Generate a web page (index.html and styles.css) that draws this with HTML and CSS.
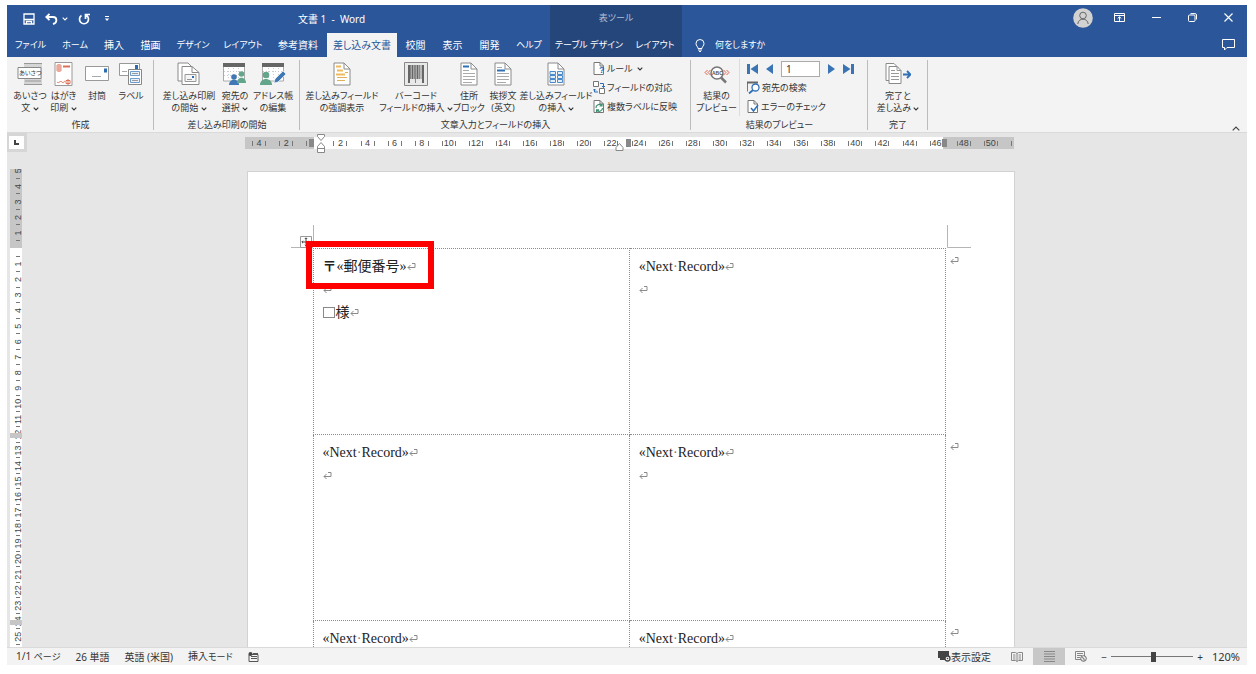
FILE: index.html
```html
<!DOCTYPE html>
<html lang="ja">
<head>
<meta charset="utf-8">
<title>文書 1 - Word</title>
<link rel="stylesheet" href="styles.css">
</head>
<body>
<svg class="defs" aria-hidden="true">
  <symbol id="chev" viewBox="0 0 6 4"><path d="M.7.7 3 3 5.300.7" fill="none" stroke="currentColor" stroke-width="1.1"/></symbol>
  <symbol id="ret" viewBox="0 0 9 8"><path d="M8 .5V4.500H1M5 .5H8M3.500 2 1 4.500 3.500 7" fill="none" stroke="#8a8a8a" stroke-width="1"/></symbol>
  <symbol id="sheet" viewBox="0 0 18 24"><path d="M1 1h10l6 6v16H1z" fill="#fff" stroke="#8a8a8a"/><path d="M11 1v6h6" fill="none" stroke="#8a8a8a"/></symbol>
  <symbol id="minisheet" viewBox="0 0 12 13"><path d="M1 .5h6l3.500 3.500v8.500H1z" fill="#fff" stroke="#777"/><path d="M7 .5V4h3.500" fill="none" stroke="#777"/></symbol>
</svg>
<div class="app">
  <header class="titlebar">
    <div class="quick">
      <button class="tool" aria-label="上書き保存"><svg width="12" height="12" viewBox="0 0 12 12"><path d="M1 1h10v10H1z" fill="none" stroke="#fff" stroke-width="1.300"/><path d="M1 6.500h10M3.500 11V8.500h5V11" fill="none" stroke="#fff" stroke-width="1.300"/></svg></button>
      <button class="tool undo" aria-label="元に戻す"><svg width="13" height="12" viewBox="0 0 13 12"><path d="M4.500.8 1.300 4l3.200 3.200M1.500 4h6.500c4.500 0 4.500 6 0 7" fill="none" stroke="#fff" stroke-width="1.800"/></svg><svg class="chev" width="6" height="4"><use href="#chev"/></svg></button>
      <button class="tool" aria-label="やり直し"><svg width="12" height="12" viewBox="0 0 12 12"><path d="M3.500 2.500A4.500 4.500 0 1 0 8.500 2.500M7.500 6V1.500H12" fill="none" stroke="#fff" stroke-width="1.700"/></svg></button>
      <button class="tool" aria-label="クイック アクセスのカスタマイズ"><svg width="6" height="6" viewBox="0 0 6 6"><path d="M1 .5h4" stroke="#fff"/><path d="M.8 2.500h4.400L3 5z" fill="#fff"/></svg></button>
    </div>
    <h1 class="doc-title">文書 1 &nbsp;- &nbsp;Word</h1>
    <div class="context-title kana">表ツール</div>
    <div class="window-tools">
      <button class="tool" aria-label="アカウント"><svg width="20" height="20" viewBox="0 0 20 20"><circle cx="10" cy="10" r="9.800" fill="#d2d2d2"/><circle cx="10" cy="7.500" r="3.300" fill="none" stroke="#666"/><path d="M4.800 16c.5-6.500 9.900-6.500 10.400 0" fill="none" stroke="#666"/></svg></button>
      <button class="tool" aria-label="リボンの表示オプション"><svg width="11" height="9" viewBox="0 0 11 9"><path d="M.5.5h10v8H.5zM.5 2.500h10" fill="none" stroke="#fff"/><path d="M5.500 8V4M3.700 5.500 5.500 3.800l1.800 1.700" fill="none" stroke="#fff"/></svg></button>
      <button class="tool" aria-label="最小化"><svg width="9" height="9" viewBox="0 0 9 9"><path d="M0 4.500h9" stroke="#fff"/></svg></button>
      <button class="tool" aria-label="元のサイズに戻す"><svg width="9" height="9" viewBox="0 0 9 9"><rect x=".5" y="2" width="6.500" height="6.500" rx="1" fill="none" stroke="#fff"/><path d="M2.500.6H7A1.500 1.500 0 0 1 8.500 2v4.500" fill="none" stroke="#fff"/></svg></button>
      <button class="tool" aria-label="閉じる"><svg width="9" height="9" viewBox="0 0 9 9"><path d="m.5.5 8 8M8.500.5l-8 8" stroke="#fff" stroke-width="1.100"/></svg></button>
    </div>
  </header>
  <nav class="tabs" aria-label="リボン タブ">
    <button class="kana">ファイル</button><button class="kana">ホーム</button><button>挿入</button><button>描画</button><button class="kana">デザイン</button><button class="kana">レイアウト</button><button>参考資料</button><button class="active">差し込み文書</button><button>校閲</button><button>表示</button><button>開発</button><button class="kana">ヘルプ</button><button class="context kana">テーブル デザイン</button><button class="context kana">レイアウト</button>
    <button class="tell kana"><svg width="10" height="13" viewBox="0 0 10 13"><path d="M3 9.500C3 7.500 1 7 1 4.500a4 4 0 0 1 8 0C9 7 7 7.500 7 9.500zM3 11h4M4 12.500h2" fill="none" stroke="#fff"/></svg>何をしますか</button>
    <button class="comment" aria-label="コメント"><svg width="13" height="12" viewBox="0 0 13 12"><path d="M.5.5h12v8H5L2.500 11V8.500h-2z" fill="none" stroke="#fff"/></svg></button>
  </nav>

  <section class="ribbon kana" aria-label="差し込み文書">
    <div class="group">
      <div class="items create">
        <button class="big"><svg width="26" height="24" viewBox="0 0 26 24"><path d="M7 1h18v22H7z" fill="#d5d5d5"/><path d="M7 1.500h18M7 22.500h18M8 19h16" stroke="#999"/><path d="M1 5.500h23v11H1z" fill="#fff" stroke="#888"/><text x="2" y="13" class="icon-ja">あいさつ</text></svg><span>あいさつ<br>文 <svg class="chev" width="6" height="4"><use href="#chev"/></svg></span></button>
        <button class="big"><svg width="19" height="24" viewBox="0 0 19 24"><path d="M1 .5h17v23H1z" fill="#fff" stroke="#999"/><path d="M3 3h4v6H3zM3 5h4M3 7h4M5 2v8" fill="none" stroke="#e58b78"/><path d="M9 4.500h7" stroke="#d9705a" stroke-width="2"/><path d="M3 20c2 2 3-2 5 0s2-1 3-1M12 18.500h4v3h-4zM14 17v6" fill="none" stroke="#e07058"/></svg><span>はがき<br>印刷 <svg class="chev" width="6" height="4"><use href="#chev"/></svg></span></button>
        <button class="big"><svg width="24" height="24" viewBox="0 0 24 24"><path d="M.5 4.500h23v14H.5z" fill="#fff" stroke="#999"/><path d="M19 6.500h3v4h-3z" fill="#2b6cb3"/><path d="M7 14.500h9" stroke="#aaa"/></svg><span>封筒</span></button>
        <button class="big"><svg width="24" height="24" viewBox="0 0 24 24"><path d="M.5 1.500h20v12H.5z" fill="#fff" stroke="#999"/><path d="M16 3h3v4h-3z" fill="#2b6cb3"/><path d="M3 9.500h5" stroke="#aaa"/><path d="M9.500 7.500h13v15h-13z" fill="#fff" stroke="#888"/><path d="M11.500 9.500h9v4h-9zM11.500 16.500h9v4h-9z" fill="#e9f1fa" stroke="#6f9ccb"/><path d="M13 11.500h6M13 18.500h6" stroke="#999"/></svg><span>ラベル</span></button>
      </div>
      <h2>作成</h2>
    </div>
    <div class="group">
      <div class="items start">
        <button class="big"><svg width="24" height="24" viewBox="0 0 24 24"><path d="M1 1h10l5 5v13H1z" fill="#fff" stroke="#8a8a8a"/><path d="M5 4.500h10l7 6v12H5z" fill="#fff" stroke="#8a8a8a"/><path d="M15 4.500v6h7" fill="none" stroke="#8a8a8a"/><path d="M8 12.500h11v7H8z" fill="#f6f6f6" stroke="#999"/><path d="M15 14h2v2h-2z" fill="#2b6cb3"/><path d="M10 17.500h5" stroke="#999"/></svg><span>差し込み印刷<br>の開始 <svg class="chev" width="6" height="4"><use href="#chev"/></svg></span></button>
        <button class="big"><svg width="24" height="24" viewBox="0 0 24 24"><path d="M.5 2h21v17H.5z" fill="#fff" stroke="#aaa"/><path d="M0 1h22v4H0z" fill="#666"/><path d="M1 9.500h20M1 13.500h20M5.500 6v12M10.500 6v12M15.500 6v12" stroke="#ccc" stroke-dasharray="1 2"/><circle cx="11" cy="15" r="2.800" fill="#3f78b5"/><path d="M6 23c0-7 10-7 10 0z" fill="#3f78b5"/><circle cx="18.500" cy="12" r="2.800" fill="#65a58c"/><path d="M14 21c0-7 9-7 9 0z" fill="#65a58c"/></svg><span>宛先の<br>選択 <svg class="chev" width="6" height="4"><use href="#chev"/></svg></span></button>
        <button class="big"><svg width="26" height="24" viewBox="0 0 26 24"><path d="M2.500 2h21v17h-21z" fill="#fff" stroke="#aaa"/><path d="M2 1h22v4H2z" fill="#666"/><path d="M3 9.500h20M8.500 6v12M13.500 6v12M18.500 6v12" stroke="#ccc" stroke-dasharray="1 2"/><circle cx="6" cy="13" r="3.300" fill="#65a58c"/><path d="M0 23c0-8 12-8 12 0z" fill="#65a58c"/><path d="m14 21 1-4 8-8 3 3-8 8z" fill="#3f78b5" stroke="#fff" stroke-width=".6"/></svg><span>アドレス帳<br>の編集</span></button>
      </div>
      <h2>差し込み印刷の開始</h2>
    </div>
    <div class="group">
      <div class="items fields">
        <button class="big"><svg width="18" height="24"><use href="#sheet"/><path d="M3 4.500h5M4 8.500h6M3 12.500h9" stroke="#f0b95c" stroke-width="2"/><path d="M12 10.500h3M4 15.500h10M4 18.500h8" stroke="#e3b05a"/></svg><span>差し込みフィールド<br>の強調表示</span></button>
        <button class="big"><svg width="24" height="24" viewBox="0 0 24 24"><path d="M.5.5h23v23H.5z" fill="#e9e9e9" stroke="#888"/><path d="M5 3v18M8.500 3v14M13.500 3v14M19 3v18" stroke="#666" stroke-width="2"/><path d="M6.500 3v14M10.500 3v14M11.500 3v18M15.500 3v14M17 3v14" stroke="#888"/></svg><span>バーコード<br>フィールドの挿入 <svg class="chev" width="6" height="4"><use href="#chev"/></svg></span></button>
        <button class="big"><svg width="18" height="24"><use href="#sheet"/><path d="M3 4.500h6" stroke="#2f6fb6" stroke-width="2"/><path d="M3 8.500h6M3 11.500h12M3 14.500h12M3 17.500h12M3 20.500h9" stroke="#aaa"/></svg><span>住所<br>ブロック</span></button>
        <button class="big"><svg width="18" height="24"><use href="#sheet"/><path d="M3 8.500h8" stroke="#2f6fb6" stroke-width="2"/><path d="M3 5.500h5M3 11.500h12M3 14.500h12M3 17.500h12M3 20.500h9" stroke="#aaa"/></svg><span>挨拶文<br>(英文)</span></button>
        <button class="big"><svg width="18" height="24"><use href="#sheet"/><path d="M3 9.500h5.500v3H3zM10.500 9.500h5v3h-5zM3 13.500h5.500v3H3zM10.500 13.500h5v3h-5zM3 17.500h5.500v3H3zM10.500 17.500h5v3h-5z" fill="#e3eef9" stroke="#4b8ac6"/></svg><span>差し込みフィールド<br>の挿入 <svg class="chev" width="6" height="4"><use href="#chev"/></svg></span></button>
        <div class="stack">
          <button class="small"><svg width="12" height="13"><use href="#minisheet"/><text x="6" y="11" class="icon-q">?</text></svg>ルール <svg class="chev" width="6" height="4"><use href="#chev"/></svg></button>
          <button class="small"><svg width="12" height="13" viewBox="0 0 12 13"><path d="M.5.5h5v5h-5zM6.500 7.500h5v5h-5z" fill="#fff" stroke="#777"/><path d="M7 2.500h3.500v4M9 5l1.500 1.500L12 5M5 11H1.500V8M0 9.500 1.500 8 3 9.500" fill="none" stroke="#2b6cb3"/></svg>フィールドの対応</button>
          <button class="small"><svg width="12" height="13"><use href="#minisheet"/><path d="M3 8a3.200 3.200 0 0 1 5.500-2.500M9.500 8A3.200 3.200 0 0 1 4 10.300M9 3.500v2.500H6.500M3.500 12V9.800H6" fill="none" stroke="#3f9270" stroke-width="1.200"/></svg>複数ラベルに反映</button>
        </div>
      </div>
      <h2>文章入力とフィールドの挿入</h2>
    </div>
    <div class="group">
      <div class="items preview">
        <button class="big"><svg width="26" height="24" viewBox="0 0 26 24"><path d="M3.500 8 1 10.500 3.500 13M6.500 8 4 10.500 6.500 13M19.500 8l2.500 2.500-2.500 2.500M22.500 8l2.500 2.500-2.500 2.500" fill="none" stroke="#e0604a"/><circle cx="13" cy="11" r="6" fill="#fff" stroke="#777" stroke-width="1.500"/><path d="m17 15.500 5 5" stroke="#777" stroke-width="2.500"/><text x="8" y="13" class="icon-abc">ABC</text></svg><span>結果の<br>プレビュー</span></button>
        <div class="stack ruled">
          <div class="records">
            <button aria-label="先頭のレコード"><svg width="11" height="10" viewBox="0 0 11 10"><path d="M0 0h3v10H0zM11 0v10L3.500 5z" fill="#3a74b4"/></svg></button>
            <button aria-label="前のレコード"><svg width="7" height="10" viewBox="0 0 7 10"><path d="M7 0v10L0 5z" fill="#3a74b4"/></svg></button>
            <input type="text" value="1" aria-label="レコード">
            <button aria-label="次のレコード"><svg width="7" height="10" viewBox="0 0 7 10"><path d="M0 0v10l7-5z" fill="#3a74b4"/></svg></button>
            <button aria-label="最後のレコード"><svg width="11" height="10" viewBox="0 0 11 10"><path d="M8 0h3v10H8zM0 0v10l7.500-5z" fill="#3a74b4"/></svg></button>
          </div>
          <button class="small"><svg width="13" height="13" viewBox="0 0 13 13"><path d="M.5 10.500V1.500h10" fill="none" stroke="#777"/><path d="M0 .5h11v2H0z" fill="#666"/><circle cx="8.500" cy="6.500" r="3.500" fill="#fff" stroke="#2f6fb6" stroke-width="1.300"/><path d="m6 9-4 3.500" stroke="#2f6fb6" stroke-width="1.800"/></svg>宛先の検索</button>
          <button class="small"><svg width="12" height="13"><use href="#minisheet"/><path d="m4 8 2.500 3L11 5" fill="none" stroke="#2f6fb6" stroke-width="1.500"/></svg>エラーのチェック</button>
        </div>
      </div>
      <h2>結果のプレビュー</h2>
    </div>
    <div class="group">
      <div class="items finish">
        <button class="big"><svg width="26" height="24" viewBox="0 0 26 24"><path d="M1 1.500h8l4 4v13H1z" fill="#fff" stroke="#8a8a8a"/><path d="M4 4.500h8l4 4v13H4z" fill="#fff" stroke="#8a8a8a"/><path d="M12 4.500v4h4M6 8.500h4M6 11.500h8M6 14.500h8M6 17.500h8" fill="none" stroke="#999"/><path d="M18 12.500h7M22 9l3.500 3.500L22 16" fill="none" stroke="#2f6fb6" stroke-width="1.800"/></svg><span>完了と<br>差し込み <svg class="chev" width="6" height="4"><use href="#chev"/></svg></span></button>
      </div>
      <h2>完了</h2>
    </div>
    <button class="collapse" aria-label="リボンを折りたたむ"><svg width="8" height="5" viewBox="0 0 8 5"><path d="M.7 4.300 4 1l3.300 3.300" fill="none" stroke="#444" stroke-width="1.200"/></svg></button>
  </section>

  <main class="workspace">
    <button class="tab-stop" aria-label="タブの種類"><svg width="5" height="5" viewBox="0 0 5 5"><path d="M1 0v4h4" fill="none" stroke="#444" stroke-width="2"/></svg></button>
    <div class="h-ruler"><svg id="hruler" width="767" height="20"></svg></div>
    <div class="v-ruler"><svg id="vruler" width="12" height="478"></svg></div>
    <div class="canvas">
      <article class="page">
        <svg class="crop" width="680" height="24" viewBox="0 0 680 24"><path d="M22.500 0v22M0 22.500h22M656.500 0v22.500H680" fill="none" stroke="#b5b5b5"/></svg>
        <svg class="handle" width="12" height="12" viewBox="0 0 12 12"><path d="M.5.5h11v11H.5z" fill="#fff" stroke="#999"/><path d="M6 2v8M2 6h8M4.800 3 6 1.800 7.200 3M4.800 9 6 10.200 7.200 9M3 4.800 1.800 6 3 7.200M9 4.800 10.200 6 9 7.200" fill="none" stroke="#444"/></svg>
        <table class="labels">
          <tr>
            <td><p><strong>〒</strong>«郵便番号»<svg class="ret"><use href="#ret"/></svg></p><p><svg class="ret"><use href="#ret"/></svg></p><p><i class="space"></i>様<svg class="ret"><use href="#ret"/></svg></p></td>
            <td><p>«Next<b>·</b>Record»<svg class="ret"><use href="#ret"/></svg></p><p><svg class="ret"><use href="#ret"/></svg></p></td>
            <td class="end"><svg class="ret"><use href="#ret"/></svg></td>
          </tr>
          <tr>
            <td><p>«Next<b>·</b>Record»<svg class="ret"><use href="#ret"/></svg></p><p><svg class="ret"><use href="#ret"/></svg></p></td>
            <td><p>«Next<b>·</b>Record»<svg class="ret"><use href="#ret"/></svg></p><p><svg class="ret"><use href="#ret"/></svg></p></td>
            <td class="end"><svg class="ret"><use href="#ret"/></svg></td>
          </tr>
          <tr>
            <td><p>«Next<b>·</b>Record»<svg class="ret"><use href="#ret"/></svg></p></td>
            <td><p>«Next<b>·</b>Record»<svg class="ret"><use href="#ret"/></svg></p></td>
            <td class="end"><svg class="ret"><use href="#ret"/></svg></td>
          </tr>
        </table>
        <div class="highlight"></div>
      </article>
    </div>
  </main>

  <footer class="status">
    <div class="info"><span>1/1 <span class="kana">ページ</span></span><span>26 単語</span><span>英語 (米国)</span><span>挿入<span class="kana">モード</span></span>
      <svg width="11" height="10" viewBox="0 0 11 10"><path d="M1 2.500h9v7H1z" fill="none" stroke="#555"/><path d="M5 1.500h5M3 4.500h6M3 6.500h6" stroke="#555"/><circle cx="2.500" cy="2" r="2" fill="#444"/></svg></div>
    <div class="views">
      <button class="display"><svg width="13" height="11" viewBox="0 0 13 11"><path d="M0 0h11v6H7v3H2V7H0z" fill="#444"/><circle cx="9.500" cy="7.500" r="2.500" fill="#f3f3f3" stroke="#444" stroke-width="1.300"/><circle cx="9.500" cy="7.500" r=".8" fill="#444"/></svg>表示設定</button>
      <button class="view" aria-label="閲覧モード"><svg width="12" height="10" viewBox="0 0 12 10"><path d="M.5.5h4l1.500 1 1.500-1h4v8h-4L6 9.500l-1.500-1h-4zM6 1.500v8M2 3h2.500M2 5h2.500M2 7h2.500M7.500 3H10M7.500 5H10M7.500 7H10" fill="none" stroke="#888"/></svg></button>
      <button class="view active" aria-label="印刷レイアウト"><svg width="11" height="11" viewBox="0 0 11 11"><path d="M0 .5h11M0 3h11M0 5.500h11M0 8h11M0 10.500h11" stroke="#888"/></svg></button>
      <button class="view" aria-label="Web レイアウト"><svg width="12" height="11" viewBox="0 0 12 11"><path d="M.5.5h9v8h-9zM2 2.500h6M2 4.500h5M2 6.500h3" fill="none" stroke="#888"/><circle cx="8.500" cy="7.500" r="2.800" fill="#f3f3f3" stroke="#666"/><path d="m7 6.500 2 1 0 2" fill="none" stroke="#666"/></svg></button>
      <button class="zoom" aria-label="縮小">−</button>
      <input class="slider" type="range" min="0" max="100" value="52" aria-label="ズーム">
      <button class="zoom" aria-label="拡大">+</button>
      <span class="percent">120%</span>
    </div>
  </footer>
</div>
<script src="rulers.js"></script>
</body>
</html>
```

FILE: styles.css
```css
* { box-sizing: border-box; }
body {
  margin: 0;
  height: 100vh;
  padding: 5px 9px 9px 7px;
  background: #fff;
  color: #333;
  font: 10px/12px "Noto Sans", "Noto Sans CJK JP", sans-serif;
  font-feature-settings: "palt";
}
button {
  border: 0;
  padding: 0;
  background: none;
  color: inherit;
  font: inherit;
  font-feature-settings: inherit;
  white-space: nowrap;
}
h1, h2, p { margin: 0; font: inherit; }
.defs { position: absolute; width: 0; height: 0; }
.app { height: 100%; display: flex; flex-direction: column; overflow: hidden; }
.chev { vertical-align: middle; }
.kana { font-size: 9px; }

.titlebar { display: flex; height: 28px; background: #2b579a; color: #fff; }
.quick { width: 267px; padding-left: 16px; display: flex; align-items: center; gap: 10px; }
.tool { display: flex; align-items: center; gap: 4px; }
.quick .tool:last-child { margin-left: 4px; }
.doc-title { width: 276px; padding-left: 24px; line-height: 28px; }
.context-title { width: 132px; background: #25467b; color: #b4c0d5; text-align: center; line-height: 26px; }
.window-tools { margin-left: auto; padding-right: 14px; display: flex; align-items: center; gap: 27px; height: 25px; }
.window-tools .tool:first-child { margin-right: -6px; }

.tabs {
  display: grid;
  grid-template-columns: 47px 42px 36px 37px 48px 52px 58px 70px 37px 37px 37px 42px 78px 54px 94px 1fr;
  height: 24px;
  background: #2b579a;
  color: #fff;
}
.tabs .active { background: #f3f3f3; color: #2b579a; }
.tabs .context { background: #25467b; }
.tabs .tell { display: flex; align-items: center; gap: 10px; padding-left: 13px; }
.tabs .comment { justify-self: end; padding-right: 12px; display: flex; align-items: center; }

.ribbon { display: flex; height: 76px; background: #f3f3f3; border-bottom: 1px solid #dadada; }
.group { display: flex; flex-direction: column; justify-content: space-between; padding: 5px 0 1px; position: relative; }
.group::after { content: ""; position: absolute; right: 0; top: 3px; bottom: 2px; width: 1px; background: #bcbcbc; }
.group h2 { text-align: center; }
.items { display: grid; align-items: start; }
.create { grid-template-columns: 34px 33px 34px 34px; padding: 0 6px; }
.start { grid-template-columns: 58px 34px 42px; padding: 0 6px; }
.fields { grid-template-columns: 78px 70px 36px 32px 74px 98px; padding-left: 3px; }
.preview { grid-template-columns: 39px 132px; padding-left: 6px; }
.finish { grid-template-columns: 60px; }
.big { display: flex; flex-direction: column; align-items: center; gap: 4px; }
.big > span { margin: 0 -10px; }
.stack { height: 57px; margin-top: -3px; display: flex; flex-direction: column; }
.ruled { margin-left: 3px; padding-left: 7px; border-left: 1px solid #dcdcdc; }
.small { height: 19px; display: flex; align-items: center; gap: 2px; }
.small .chev { margin-left: 2px; }
.records { height: 19px; display: flex; align-items: center; gap: 8px; }
.records button { display: flex; }
.records input { width: 39px; height: 16px; border: 1px solid #ababab; padding: 0 4px; font: 10px "Noto Sans", sans-serif; color: #333; }
.collapse { margin: auto 7px 1px auto; display: flex; }
.icon-ja { font-size: 6px; fill: #333; }
.icon-q { font: bold 9px "Liberation Sans", sans-serif; fill: #2b6cb3; }
.icon-abc { font: bold 5px "Liberation Sans", sans-serif; fill: #555; }

.workspace {
  flex: 1;
  min-height: 0;
  display: grid;
  grid-template: 20px 1fr / 22px 1fr;
  background: #e6e6e6;
  overflow: hidden;
}
.tab-stop { width: 20px; height: 19px; background: #fff; border: 3px solid #d6d6d6; border-left-width: 2px; display: flex; align-items: center; justify-content: center; }
.h-ruler { display: flex; justify-content: center; padding-right: 15px; }
.h-ruler svg { overflow: visible; }
.v-ruler { padding: 16px 0 0 3px; overflow: hidden; }
.canvas { display: flex; justify-content: center; padding: 18px 15px 0 0; overflow: hidden; }
.page { position: relative; width: 768px; height: 1080px; flex: none; padding: 76px 0 0 65px; background: #fff; border: 1px solid #d2d2d2; }
.crop { position: absolute; left: 43px; top: 53px; }
.handle { position: absolute; left: 52px; top: 64px; }
.highlight { position: absolute; left: 58px; top: 69px; width: 128px; height: 48px; border: 6px solid #f00; }
.labels { border-collapse: collapse; table-layout: fixed; width: 650px; }
.labels tr { height: 186px; }
.labels td { width: 316px; padding: 6px 9px; vertical-align: top; border: 1px dotted #8c8c8c; font: 14px/23px "Liberation Serif", "Noto Sans CJK JP", serif; color: #222; }
.labels .end { width: 17px; border-width: 0 0 0 1px; padding: 0 4px; }
.labels p { height: 23px; }
.labels b { font-weight: normal; color: #777; }
.ret { width: 9px; height: 8px; }
.space { display: inline-block; width: 12px; height: 11px; margin-right: 1px; border: 1px solid #888; vertical-align: -1px; }

.tick-label { font: 9px "Liberation Sans", sans-serif; fill: #444; text-anchor: middle; }

.status { display: flex; justify-content: space-between; align-items: center; height: 18px; background: #f3f3f3; border-top: 1px solid #dadada; }
.info { display: flex; align-items: center; gap: 15px; padding-left: 9px; }
.views { display: flex; align-items: center; height: 17px; }
.display { display: flex; align-items: center; margin-right: 10px; }
.view { width: 32px; height: 17px; display: flex; align-items: center; justify-content: center; }
.view.active { background: #c8c8c8; }
.zoom { width: 14px; }
.slider { appearance: none; width: 82px; height: 12px; margin: 0; background: linear-gradient(#777, #777) center / 100% 1px no-repeat; }
.slider::-webkit-slider-thumb { appearance: none; width: 5px; height: 10px; background: #444; }
.percent { width: 40px; padding-right: 7px; text-align: right; font: 11px/17px "Noto Sans", sans-serif; }
```

FILE: rulers.js
```js
const NS = "http://www.w3.org/2000/svg";
function add(parent, name, attrs, text) {
  const el = document.createElementNS(NS, name);
  for (const key in attrs) el.setAttribute(key, attrs[key]);
  if (text !== undefined) el.textContent = text;
  parent.appendChild(el);
}

const h = document.getElementById("hruler");
add(h, "rect", { x: -2, y: 4, width: 769, height: 12, fill: "#c6c6c6" });
add(h, "rect", { x: 67, y: 4, width: 629, height: 12, fill: "#fff" });
for (let n = -4; n <= 52; n += 2) {
  const x = 66.3 + n * 13.55;
  if (n !== 0 && n < 52) add(h, "text", { x, y: 13, class: "tick-label" }, Math.abs(n));
  add(h, "rect", { x: Math.round(x - 7), y: 8, width: 1, height: 5, fill: "#777" });
  if (n < 52 && n !== 0) add(h, "rect", { x: Math.round(x + 6), y: 8, width: 1, height: 5, fill: "#777" });
}
for (const x of [62, 379, 695]) add(h, "rect", { x, y: 6, width: 5, height: 8, fill: "#888" });
add(h, "path", { d: "M70.500 1.500h7v2l-3.500 4-3.500-4zM70.500 19.500v-6l3.500-4 3.500 4v6zM70.500 15.500h7M369 14.500l3.500-4 3.500 4v3h-7z", fill: "#fff", stroke: "#888" });

const v = document.getElementById("vruler");
add(v, "rect", { x: 0, y: 0, width: 12, height: 79, fill: "#c6c6c6" });
add(v, "rect", { x: 0, y: 79, width: 12, height: 399, fill: "#fff" });
for (let n = -5; n <= 25; n++) {
  const y = 79.500 + n * 15.53;
  if (n !== 0) add(v, "text", { x: 0, y: 0, transform: `translate(11 ${y}) rotate(-90)`, class: "tick-label" }, Math.abs(n));
  add(v, "rect", { x: 6, y: Math.round(y + 7), width: 4, height: 1, fill: "#777" });
}
for (const y of [264, 451]) add(v, "rect", { x: 0, y, width: 12, height: 5, fill: "#c6c6c6" });
```
